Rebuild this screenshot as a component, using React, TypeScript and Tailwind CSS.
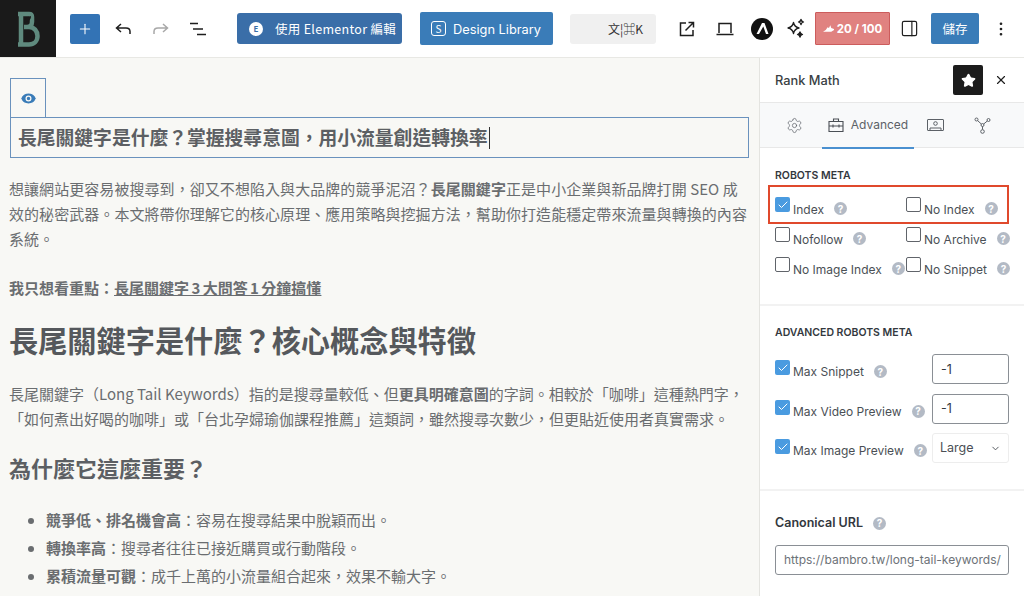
import { Plus, PanelRight, MoreVertical, Star, X, Settings, Check, ChevronDown, Eye } from 'lucide-react';

const cjk = { fontFamily: '"Noto Sans CJK TC", "Liberation Sans", sans-serif' };

function Help({ className = '' }: { className?: string }) {
  return (
    <span className={`inline-flex h-[13px] w-[13px] shrink-0 items-center justify-center rounded-full bg-[#b3bac5] text-[10px] font-bold leading-none text-white ${className}`}>?</span>
  );
}

function Box({ checked = false, className = '' }: { checked?: boolean; className?: string }) {
  if (checked) {
    return (
      <span className={`flex h-[15px] w-[15px] shrink-0 items-center justify-center rounded-[2px] bg-[#4a9be0] ${className}`}>
        <Check className="h-3 w-3 text-white" strokeWidth={2} />
      </span>
    );
  }
  return <span className={`h-[15px] w-[15px] shrink-0 rounded-[2px] border border-[#60646a] bg-white ${className}`} />;
}

function Option({ label, checked }: { label: string; checked?: boolean }) {
  return (
    <div className="flex h-[30px] items-start whitespace-nowrap">
      <Box checked={checked} />
      <span className="ml-[3px] mt-[4px] text-[12px] leading-[18px] text-[#4a4f55]">{label}</span>
      <Help className="ml-[10px] mt-[5px]" />
    </div>
  );
}

export default function App() {
  return (
    <div className="flex h-[596px] w-[1024px] flex-col overflow-hidden bg-white" style={cjk}>
      {/* Top bar */}
      <header className="flex h-[58px] shrink-0 items-center border-b border-[#e8e8e4] bg-white text-[#1e1e1e]">
        <div className="flex h-[57px] w-[56px] items-center justify-center bg-[#1a1a1a]">
          <svg className="h-[36px] w-[24px]" viewBox="0 0 24 36" fill="none" stroke="#5f8a7e" strokeWidth="4.500">
            <path d="M2 3h11c2 0 3 1 3 3v5c0 3-2 5-5 5M5 3v31M2 33.500h11c5 0 8.500-3.500 8.500-8.500s-3.500-9-8.500-9H8" />
            <path d="M8 12c0-4 3-6 7-7 0 4-3 6-7 7z" fill="#1a1a1a" stroke="none" />
          </svg>
        </div>
        <button className="ml-[14px] flex h-[30px] w-[30px] items-center justify-center rounded-[2px] bg-[#3373b5] text-white">
          <Plus className="h-[16px] w-[16px]" strokeWidth={1.6} />
        </button>
        <svg className="ml-[15px] h-[18px] w-[17px]" viewBox="0 0 17 18" fill="none" stroke="#1e1e1e" strokeWidth="1.500">
          <path d="M6 4L1.500 8 6 12M1.500 8H11c2.500 0 4 1.500 4 3.500V14" />
        </svg>
        <svg className="ml-[20px] h-[18px] w-[17px]" viewBox="0 0 17 18" fill="none" stroke="#a8a8a8" strokeWidth="1.500">
          <path d="M11 4l4.500 4L11 12M15.500 8H6c-2.500 0-4 1.500-4 3.500V14" />
        </svg>
        <svg className="ml-[20px] h-[18px] w-[18px]" viewBox="0 0 18 18" fill="none" stroke="#1e1e1e" strokeWidth="1.500">
          <path d="M1 3.500h8M4 9h10M8 14.500h9" />
        </svg>
        <button className="ml-[30px] flex h-[31px] w-[165px] items-center rounded-[3px] bg-[#3a6ea8] pl-[12px] text-[12.5px] text-white">
          <span className="flex h-[14px] w-[14px] items-center justify-center rounded-full bg-white text-[8px] font-bold text-[#3a6ea8]">E</span>
          <span className="ml-[12px] pt-[2px] tracking-[0.3px]">使用 Elementor 編輯</span>
        </button>
        <button className="ml-[18px] flex h-[33px] w-[133px] items-center rounded-[2px] bg-[#3a7cb8] pl-[11px] text-[12.800px] text-white">
          <span className="flex h-[15px] w-[15px] items-center justify-center rounded-[3px] border border-white text-[10px] leading-none">S</span>
          <span className="ml-[7px] pt-[2px]" style={{ fontFamily: '"Inter", sans-serif' }}>Design Library</span>
        </button>
        <div className="ml-[17px] flex h-[30px] w-[86px] items-center justify-end rounded-[3px] bg-[#f0f0f0] pr-[13px] text-[12px] text-[#333]">文¦⌘K</div>
        <svg className="ml-[22px] h-[18px] w-[18px]" viewBox="0 0 18 18" fill="none" stroke="#1e1e1e" strokeWidth="1.500">
          <path d="M8 3H2.500v12.500H15V10M7.500 10.500L15.500 2.500M10.500 2.500h5v5" />
        </svg>
        <svg className="ml-[19px] h-[20px] w-[20px]" viewBox="0 0 20 20" fill="none" stroke="#1e1e1e" strokeWidth="1.500">
          <path d="M4 14V4.500h12V14M1.500 15.500h17" />
        </svg>
        <span className="ml-[16px] flex h-[22px] w-[22px] items-center justify-center rounded-full bg-[#111]">
          <svg className="h-[13px] w-[13px]" viewBox="0 0 13 13" fill="white"><path d="M6 1h2.500l4 11H10L7.300 4.500 3 12H.500z" /></svg>
        </span>
        <svg className="ml-[12px] h-[21px] w-[21px]" viewBox="0 0 21 21" fill="none" stroke="#1e1e1e" strokeWidth="1.300" strokeLinejoin="round">
          <path d="M8.500 4.500c.7 3.500 2 4.800 5.500 5.500-3.500.7-4.800 2-5.500 5.500-.7-3.500-2-4.800-5.500-5.500 3.500-.7 4.800-2 5.500-5.500z" />
          <path d="M16 1.500c.3 1.500.8 2 2.500 2.500-1.700.5-2.200 1-2.500 2.500-.3-1.500-.8-2-2.500-2.500 1.700-.5 2.200-1 2.500-2.500z" />
          <path d="M15 14c.3 1.500.8 2 2.500 2.500-1.700.5-2.200 1-2.500 2.500-.3-1.500-.8-2-2.500-2.500 1.700-.5 2.200-1 2.500-2.500z" fill="#1e1e1e" />
        </svg>
        <div className="ml-[9px] flex h-[33px] w-[75px] items-center justify-center gap-[3px] rounded-[1px] border border-[#cc5c5c] bg-[#e08280] text-[11.500px] font-bold text-white" style={{ fontFamily: '"Inter", sans-serif' }}>
          <svg className="h-[10px] w-[11px]" viewBox="0 0 12 10" fill="white"><path d="M0 8l3-2 2-3 1.500 1L8 1l1 3 3 1v1l-3 2z" /></svg>
          <span className="pt-[3px]">20 / 100</span>
        </div>
        <PanelRight className="ml-[10px] h-[19px] w-[19px]" strokeWidth={1.5} />
        <button className="ml-[12px] h-[31px] w-[48px] rounded-[2px] bg-[#3a7cb8] pt-[2px] text-[12.5px] text-white">儲存</button>
        <MoreVertical className="ml-[13px] h-[18px] w-[18px]" strokeWidth={1.6} />
      </header>

      <div className="flex min-h-0 flex-1">
        {/* Editor */}
        <main className="w-[760px] shrink-0 overflow-hidden border-r border-[#e4e4e0] bg-[#f8f8f5] pl-[9px] pr-[10px] text-[#6a6d70]">
          <div className="ml-px mt-[20px] flex h-[39px] w-[36px] items-center justify-center border border-b-0 border-[#6a92bd]">
            <Eye className="h-[19px] w-[19px] fill-[#3a7cb8] text-[#f8f8f5]" strokeWidth={1.6} />
          </div>
          <div className="ml-px flex h-[41px] items-center border border-[#6a92bd] pl-[7px] text-[18.800px] font-bold text-[#5c5f63]">
            長尾關鍵字是什麼？掌握搜尋意圖，用小流量創造轉換率<span className="ml-px h-[22px] w-px bg-[#333]" />
          </div>
          <div className="mt-[18px] text-[15px] leading-[25px] tracking-[0.06px]">
            <p className="h-[25px] whitespace-nowrap">想讓網站更容易被搜尋到，卻又不想陷入與大品牌的競爭泥沼？<b className="font-bold">長尾關鍵字</b>正是中小企業與新品牌打開 SEO 成</p>
            <p className="h-[25px] whitespace-nowrap">效的秘密武器。本文將帶你理解它的核心原理、應用策略與挖掘方法，幫助你打造能穩定帶來流量與轉換的內容</p>
            <p className="h-[25px] whitespace-nowrap">系統。</p>
          </div>
          <p className="mt-[24px] text-[15px] font-bold leading-[25px]">
            我只想看重點：<span className="underline [word-spacing:-1px]">長尾關鍵字 3 大問答 1 分鐘搞懂</span>
          </p>
          <h2 className="mt-[17px] text-[29.200px] font-bold leading-[44px] text-[#55585c]">長尾關鍵字是什麼？核心概念與特徵</h2>
          <div className="mt-[19.500px] text-[15px] leading-[25px]">
            <p className="h-[25px] whitespace-nowrap">長尾關鍵字（Long Tail Keywords）指的是搜尋量較低、但<b className="font-bold">更具明確意圖</b>的字詞。相較於「咖啡」這種熱門字，</p>
            <p className="h-[25px] whitespace-nowrap">「如何煮出好喝的咖啡」或「台北孕婦瑜伽課程推薦」這類詞，雖然搜尋次數少，但更貼近使用者真實需求。</p>
          </div>
          <h3 className="mt-[19px] text-[22px] font-bold leading-[34px] text-[#5c5f63]">為什麼它這麼重要？</h3>
          <ul className="mt-[22.500px] list-disc pl-[37px] text-[15px] leading-[28px]">
            <li><b className="font-bold">競爭低、排名機會高</b>：容易在搜尋結果中脫穎而出。</li>
            <li><b className="font-bold">轉換率高</b>：搜尋者往往已接近購買或行動階段。</li>
            <li><b className="font-bold">累積流量可觀</b>：成千上萬的小流量組合起來，效果不輸大字。</li>
          </ul>
        </main>

        {/* Rank Math sidebar */}
        <aside className="relative flex-1 overflow-hidden bg-white text-[#33383e]" style={{ fontFamily: '"Inter", "Noto Sans CJK TC", sans-serif' }}>
          <div className="flex h-[45px] items-center border-b border-[#e8e8e8] pl-[15px]">
            <span className="pt-px text-[12.800px] font-medium text-[#3a3f44]">Rank Math</span>
            <span className="ml-auto flex h-[30px] w-[30px] items-center justify-center rounded-[2px] bg-[#1c1c1c]">
              <Star className="h-[15px] w-[15px] fill-white text-white" />
            </span>
            <X className="ml-[11px] mr-[16px] h-[14px] w-[14px] text-[#1e1e1e]" strokeWidth={2} />
          </div>
          <div className="flex h-[45px] items-center border-b border-[#e8e8e8] bg-[#f8f9fa] text-[#5c6167]">
            <Settings className="ml-[26px] h-[17px] w-[17px]" strokeWidth={1} />
            <div className="relative ml-[19px] flex h-[45px] w-[92px] items-center justify-center gap-[7px]">
              <svg className="h-[16px] w-[16px]" viewBox="0 0 16 16" fill="none" stroke="#4a4f55" strokeWidth="1.100">
                <path d="M1 4.500h14v10H1zM5.500 4.500V2h5v2.500M1 9h14M5 7.500v3M11 7.500v3" />
              </svg>
              <span className="text-[12px]">Advanced</span>
              <span className="absolute inset-x-0 bottom-[-1px] h-[2px] bg-[#4a90d0]" />
            </div>
            <svg className="ml-[13px] h-[13px] w-[17px]" viewBox="0 0 17 13" fill="none" stroke="#5c6167" strokeWidth="1">
              <rect x="0.500" y="0.500" width="16" height="11" rx="0.500" />
              <circle cx="8.500" cy="4.500" r="1.800" />
              <path d="M3 11.500v-2.500h11v2.500" />
            </svg>
            <svg className="ml-[30px] h-[17px] w-[17px]" viewBox="0 0 17 17" fill="none" stroke="#5c6167" strokeWidth="1">
              <circle cx="2.500" cy="2.500" r="1.500" />
              <circle cx="14.500" cy="3" r="1.500" />
              <circle cx="8.500" cy="14.500" r="1.800" />
              <circle cx="8.500" cy="8" r="1.500" />
              <path d="M3.500 3.500L7.300 7M13.300 4L9.700 7M8.500 9.500v3" />
            </svg>
          </div>

          <section className="border-b-2 border-[#f2f2f2] px-[15px] pb-[17px] pt-[21px]">
            <h4 className="text-[10.500px] font-semibold leading-[14px] text-[#33383e]">ROBOTS META</h4>
            <div className="mt-[14px] grid grid-cols-[131px_1fr]">
              <Option label="Index" checked />
              <Option label="No Index" />
              <Option label="Nofollow" />
              <Option label="No Archive" />
              <Option label="No Image Index" />
              <Option label="No Snippet" />
            </div>
          </section>

          <section className="border-b-2 border-[#f2f2f2] px-[15px] pb-[26px] pt-[20px]">
            <h4 className="text-[10.500px] font-semibold leading-[14px] text-[#33383e]">ADVANCED ROBOTS META</h4>
            <div className="mt-[14px] flex h-[39.500px] items-start whitespace-nowrap">
              <Box checked className="mt-[6px]" />
              <span className="ml-[3px] mt-[9px] text-[12px] leading-[18px] text-[#4a4f55]">Max Snippet</span>
              <Help className="ml-[10px] mt-[11px]" />
              <input readOnly value="-1" className="ml-auto h-[30px] w-[77px] rounded-[3px] border border-[#8a8f95] bg-white pl-[8px] text-[12.5px] text-[#33383e]" />
            </div>
            <div className="flex h-[39.500px] items-start whitespace-nowrap">
              <Box checked className="mt-[6px]" />
              <span className="ml-[3px] mt-[9px] text-[12px] leading-[18px] text-[#4a4f55]">Max Video Preview</span>
              <Help className="ml-[10px] mt-[11px]" />
              <input readOnly value="-1" className="ml-auto h-[30px] w-[77px] rounded-[3px] border border-[#8a8f95] bg-white pl-[8px] text-[12.5px] text-[#33383e]" />
            </div>
            <div className="flex h-[30px] items-start whitespace-nowrap">
              <Box checked className="mt-[6px]" />
              <span className="ml-[3px] mt-[9px] text-[12px] leading-[18px] text-[#4a4f55]">Max Image Preview</span>
              <Help className="ml-[10px] mt-[11px]" />
              <div className="ml-auto flex h-[30px] w-[77px] items-center justify-between rounded-[3px] border border-[#ededed] pl-[7px] pr-[7px] text-[12.5px] text-[#4a4f55]">
                Large <ChevronDown className="h-[11px] w-[11px]" />
              </div>
            </div>
          </section>

          <section className="px-[15px] pt-[23px]">
            <div className="flex items-center text-[12.5px] font-semibold leading-[18px] text-[#33383e]">
              Canonical URL <Help className="ml-[10px]" />
            </div>
            <div className="mt-[13px] flex h-[30px] items-center overflow-hidden whitespace-nowrap rounded-[3px] border border-[#8a8f95] pl-[8px] text-[12px] text-[#6d7278]">
              https://bambro.tw/long-tail-keywords/
            </div>
          </section>

          {/* Red highlight sits over the option rows */}
          <div className="pointer-events-none absolute left-[8px] top-[127px] h-[39px] w-[241px] border-2 border-[#e0492c]" />
        </aside>
      </div>
    </div>
  );
}
